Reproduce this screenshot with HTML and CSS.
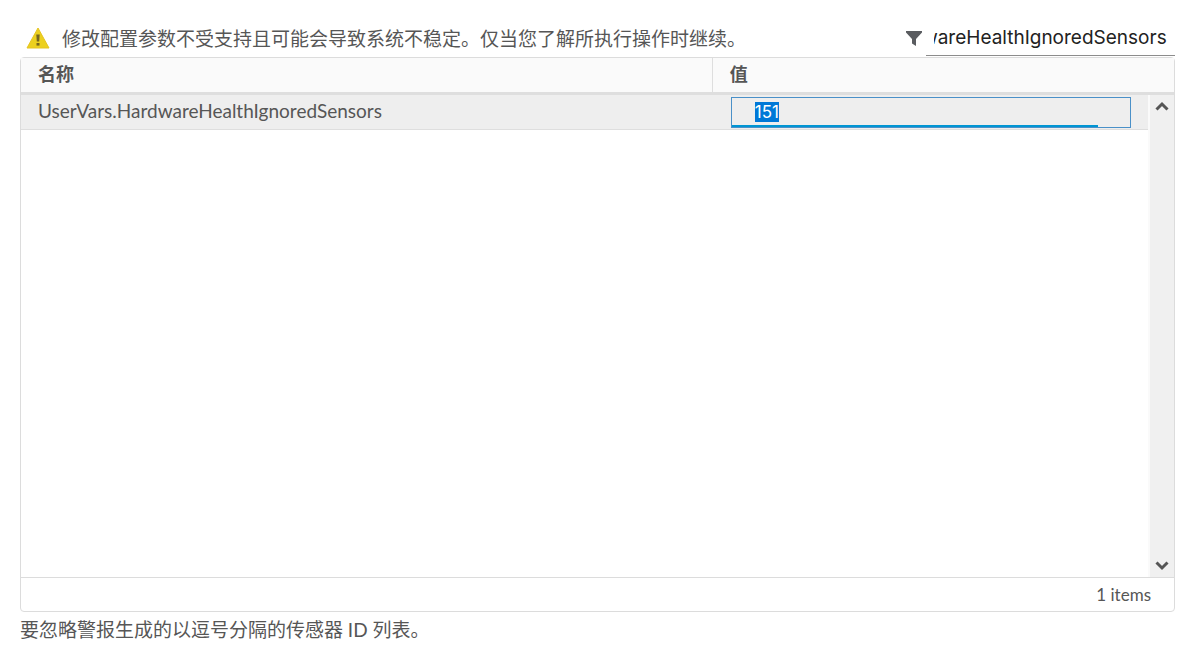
FILE: index.html
```
<!DOCTYPE html>
<html lang="zh-CN">
  <head>
    <meta charset="utf-8">
    <title>高级设置</title>
    <link rel="stylesheet" href="styles.css">
  </head>
  <body>
    <div class="toolbar">
      <svg class="warning-icon" viewBox="0 0 24 22" aria-hidden="true">
        <path d="M12 1 L23 21 H1 Z" fill="#ecd01f" stroke="#e6c420" stroke-width="1" stroke-linejoin="round"/>
        <path d="M10.3 7.5 H13.7 L13.2 14.5 H10.8 Z" fill="#75661f"/>
        <rect x="10.5" y="16" width="3" height="2.6" fill="#75661f"/>
      </svg>
      <p class="warning-text">修改配置参数不受支持且可能会导致系统不稳定。仅当您了解所执行操作时继续。</p>
      <label class="filter-label" for="filter" aria-label="筛选">
        <svg class="filter-icon" viewBox="0 0 16 15" aria-hidden="true">
          <path d="M0 0 H16 V1.5 L10 8 V15 L6 12.5 V8 L0 1.5 Z" fill="#5a5c60"/>
        </svg>
      </label>
      <input class="filter-input" id="filter" type="text" value="UserVars.HardwareHealthIgnoredSensors">
    </div>
    <div class="datagrid">
      <div class="grid-body">
        <table class="grid-table">
          <thead>
            <tr>
              <th class="name-col">名称</th>
              <th>值</th>
            </tr>
          </thead>
          <tbody>
            <tr>
              <td>UserVars.HardwareHealthIgnoredSensors</td>
              <td class="value-cell">
                <input class="value-input" id="value" type="text" value="151" aria-label="值">
              </td>
            </tr>
          </tbody>
        </table>
        <div class="scrollbar">
          <svg class="arrow" viewBox="0 0 14 10" aria-hidden="true"><path d="M1.5 8.5 L7 3 L12.5 8.5"/></svg>
          <svg class="arrow" viewBox="0 0 14 10" aria-hidden="true"><path d="M1.5 1.5 L7 7 L12.5 1.5"/></svg>
        </div>
      </div>
      <div class="grid-footer">1 items</div>
    </div>
    <p class="description">要忽略警报生成的以逗号分隔的传感器 ID 列表。</p>
    <script>
      const filter = document.querySelector("#filter");
      const value = document.querySelector("#value");
      filter.scrollLeft = filter.scrollWidth;
      value.focus();
      value.select();
    </script>
  </body>
</html>
```
FILE: styles.css
```
* {
  box-sizing: border-box;
}

body {
  display: flex;
  flex-direction: column;
  min-height: 100vh;
  margin: 0;
  padding: 20px 24px 12px 20px;
  background-color: #fff;
  color: #565656;
  font-family: Lato, "Noto Sans CJK SC", sans-serif;
  font-size: 19px;
}

p {
  margin: 0;
}

.toolbar {
  display: flex;
  align-items: center;
  height: 36px;
}

.warning-icon {
  width: 24px;
  height: 22px;
  margin: 0 12px 0 6px;
}

.warning-text {
  flex: 1;
  padding-bottom: 2px;
  white-space: nowrap;
}

.filter-label {
  display: flex;
  margin-right: 4px;
}

.filter-icon {
  width: 16px;
  height: 15px;
}

.filter-input {
  width: 249px;
  height: 36px;
  padding: 0 8px;
  border: 0;
  border-bottom: 1px solid #8c8c8c;
  background: none;
  color: #222;
  font-family: Inter, sans-serif;
  font-size: 19px;
}

.datagrid {
  display: flex;
  flex: 1;
  flex-direction: column;
  margin-top: 1px;
  border: 1px solid #dcdcdc;
  border-radius: 4px;
}

.grid-body {
  position: relative;
  flex: 1;
}

.grid-table {
  width: 100%;
  table-layout: fixed;
  border-collapse: separate;
  border-spacing: 0;
}

th {
  height: 37px;
  padding: 0 17px 2px;
  border-bottom: 3px solid #dedede;
  background-color: #fafafa;
  font-size: 18px;
  line-height: 24px;
  text-align: left;
}

.name-col {
  width: 60%;
  border-right: 1px solid #dedede;
}

td {
  height: 35px;
  padding: 0 17px 2px;
  border-bottom: 1px solid #dedede;
  background-color: #eee;
  line-height: 24px;
}

.value-cell {
  padding: 0 43px 0 18px;
}

.value-input {
  display: block;
  width: 100%;
  height: 31px;
  padding: 0 23px;
  border: 1px solid #4a90c8;
  outline: 0;
  background: linear-gradient(#0095d3, #0095d3) left bottom / 92% 2px no-repeat;
  color: #565656;
  font-family: Inter, sans-serif;
  font-size: 17px;
}

.value-input::selection {
  background-color: #0078d7;
  color: #fff;
}

.scrollbar {
  position: absolute;
  top: 37px;
  right: 0;
  bottom: 0;
  display: flex;
  flex-direction: column;
  align-items: center;
  justify-content: space-between;
  width: 26px;
  padding: 6px 0;
  border-left: 2px solid #fafafa;
  background-color: #f0f0f0;
}

.arrow {
  width: 14px;
  height: 10px;
  fill: none;
  stroke: #555;
  stroke-width: 3;
}

.grid-footer {
  height: 34px;
  padding-right: 23px;
  border-top: 1px solid #dcdcdc;
  font-size: 17px;
  line-height: 33px;
  text-align: right;
}

.description {
  height: 31px;
  line-height: 36px;
}
```
